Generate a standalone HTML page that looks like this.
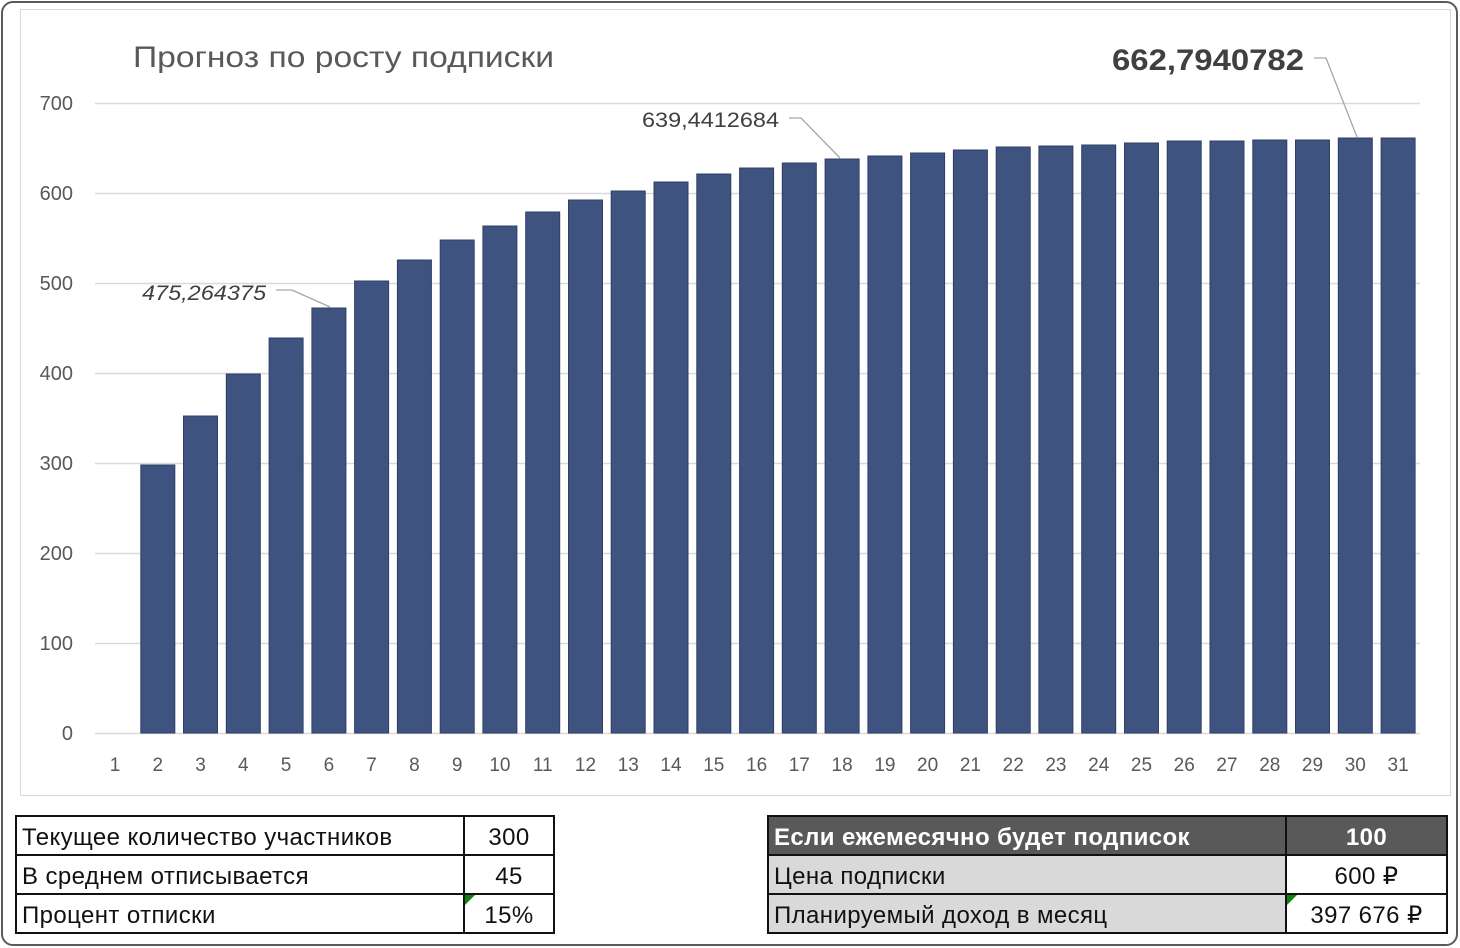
<!DOCTYPE html>
<html><head><meta charset="utf-8">
<style>
body{margin:0;width:1460px;height:948px;background:#fff;overflow:hidden;position:relative;font-family:"Liberation Sans",sans-serif}
.frame{position:absolute;left:1px;top:1px;width:1457px;height:945px;border:2px solid #5a5a5a;border-radius:12px;box-sizing:border-box}
.chart{position:absolute;left:20px;top:9px;width:1431px;height:787px;border:1px solid #d9d9d9;box-sizing:border-box}
table{position:absolute;border-collapse:collapse;font-size:24px;color:#111;letter-spacing:0.4px}
td{border:2px solid #111;height:37px;box-sizing:border-box;padding:4px 5px 0;line-height:1;white-space:nowrap}
tr{height:39px}
td.v{text-align:center;position:relative}
.tri{position:absolute;left:0;top:0;width:0;height:0;border-top:10px solid #108010;border-right:10px solid transparent}
</style></head><body>
<div class="frame"></div>
<div class="chart"></div>
<svg width="1460" height="948" style="position:absolute;left:0;top:0">
<g stroke="#d9d9d9" stroke-width="1.5">
<line x1="95" y1="103.5" x2="1420" y2="103.5"/>
<line x1="95" y1="193.5" x2="1420" y2="193.5"/>
<line x1="95" y1="283.5" x2="1420" y2="283.5"/>
<line x1="95" y1="373.5" x2="1420" y2="373.5"/>
<line x1="95" y1="463.5" x2="1420" y2="463.5"/>
<line x1="95" y1="553.5" x2="1420" y2="553.5"/>
<line x1="95" y1="643.5" x2="1420" y2="643.5"/>
<line x1="95" y1="733.5" x2="1420" y2="733.5"/>
</g>
<text x="133" y="67" font-size="30" fill="#595959" textLength="421" lengthAdjust="spacingAndGlyphs" font-family="Liberation Sans,sans-serif">Прогноз по росту подписки</text>
<g font-size="20" fill="#595959" text-anchor="end" font-family="Liberation Sans,sans-serif">
<text x="73" y="110">700</text><text x="73" y="200">600</text><text x="73" y="290">500</text><text x="73" y="380">400</text><text x="73" y="470">300</text><text x="73" y="560">200</text><text x="73" y="650">100</text><text x="73" y="740">0</text>
</g>
<g fill="#3f5380" stroke="#2f3f66" stroke-width="1">
<rect x="140.8" y="465" width="34" height="268"/>
<rect x="183.5" y="416" width="34" height="317"/>
<rect x="226.3" y="374" width="34" height="359"/>
<rect x="269.1" y="338" width="34" height="395"/>
<rect x="311.9" y="308" width="34" height="425"/>
<rect x="354.6" y="281" width="34" height="452"/>
<rect x="397.4" y="260" width="34" height="473"/>
<rect x="440.2" y="240" width="34" height="493"/>
<rect x="482.9" y="226" width="34" height="507"/>
<rect x="525.7" y="212" width="34" height="521"/>
<rect x="568.5" y="200" width="34" height="533"/>
<rect x="611.2" y="191" width="34" height="542"/>
<rect x="654" y="182" width="34" height="551"/>
<rect x="696.8" y="174" width="34" height="559"/>
<rect x="739.6" y="168" width="34" height="565"/>
<rect x="782.3" y="163" width="34" height="570"/>
<rect x="825.1" y="159" width="34" height="574"/>
<rect x="867.9" y="156" width="34" height="577"/>
<rect x="910.6" y="153" width="34" height="580"/>
<rect x="953.4" y="150" width="34" height="583"/>
<rect x="996.2" y="147" width="34" height="586"/>
<rect x="1038.9" y="146" width="34" height="587"/>
<rect x="1081.7" y="145" width="34" height="588"/>
<rect x="1124.5" y="143" width="34" height="590"/>
<rect x="1167.2" y="141" width="34" height="592"/>
<rect x="1210" y="141" width="34" height="592"/>
<rect x="1252.8" y="140" width="34" height="593"/>
<rect x="1295.5" y="140" width="34" height="593"/>
<rect x="1338.3" y="138" width="34" height="595"/>
<rect x="1381.1" y="138" width="34" height="595"/>
</g>
<g font-size="19" fill="#595959" text-anchor="middle" font-family="Liberation Sans,sans-serif">
<text x="115" y="771">1</text><text x="157.8" y="771">2</text><text x="200.5" y="771">3</text><text x="243.3" y="771">4</text><text x="286.1" y="771">5</text><text x="328.9" y="771">6</text><text x="371.6" y="771">7</text><text x="414.4" y="771">8</text><text x="457.2" y="771">9</text><text x="499.9" y="771">10</text><text x="542.7" y="771">11</text><text x="585.5" y="771">12</text><text x="628.2" y="771">13</text><text x="671" y="771">14</text><text x="713.8" y="771">15</text><text x="756.6" y="771">16</text><text x="799.3" y="771">17</text><text x="842.1" y="771">18</text><text x="884.9" y="771">19</text><text x="927.6" y="771">20</text><text x="970.4" y="771">21</text><text x="1013.2" y="771">22</text><text x="1055.9" y="771">23</text><text x="1098.7" y="771">24</text><text x="1141.5" y="771">25</text><text x="1184.2" y="771">26</text><text x="1227" y="771">27</text><text x="1269.8" y="771">28</text><text x="1312.5" y="771">29</text><text x="1355.3" y="771">30</text><text x="1398.1" y="771">31</text>
</g>
<g fill="none" stroke="#a6a6a6" stroke-width="1.3">
<polyline points="276,290 292,290 330,307"/>
<polyline points="789,118 801,118 840,158"/>
<polyline points="1314,58 1326,58 1357,137"/>
</g>
<text x="142" y="300" font-size="21" font-style="italic" fill="#404040" textLength="124" lengthAdjust="spacingAndGlyphs" font-family="Liberation Sans,sans-serif">475,264375</text>
<text x="642" y="127" font-size="21" fill="#404040" textLength="137" lengthAdjust="spacingAndGlyphs" font-family="Liberation Sans,sans-serif">639,4412684</text>
<text x="1112" y="70" font-size="30" font-weight="bold" fill="#404040" textLength="192" lengthAdjust="spacingAndGlyphs" font-family="Liberation Sans,sans-serif">662,7940782</text>
</svg>
<table style="left:15px;top:815px;width:540px">
<tr><td style="width:448px">Текущее количество участников</td><td class="v">300</td></tr>
<tr><td>В среднем отписывается</td><td class="v">45</td></tr>
<tr><td>Процент отписки</td><td class="v"><span class="tri"></span>15%</td></tr>
</table>
<table style="left:767px;top:815px;width:681px">
<tr><td style="width:518px;background:#595959;color:#fff;font-weight:bold">Если ежемесячно будет подписок</td><td class="v" style="background:#595959;color:#fff;font-weight:bold">100</td></tr>
<tr><td style="background:#d9d9d9">Цена подписки</td><td class="v">600 ₽</td></tr>
<tr><td style="background:#d9d9d9">Планируемый доход в месяц</td><td class="v"><span class="tri"></span>397 676 ₽</td></tr>
</table>
</body></html>
